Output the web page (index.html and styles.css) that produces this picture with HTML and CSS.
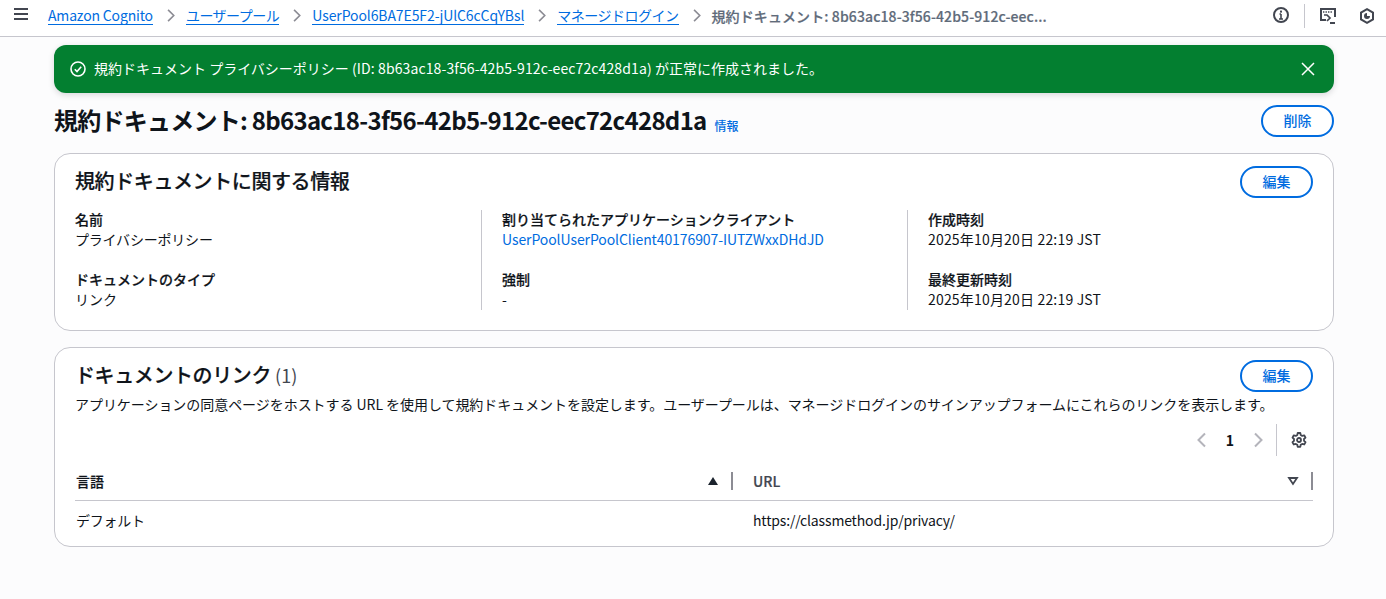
FILE: index.html
```html
<!DOCTYPE html>
<html lang="ja">
<head>
<meta charset="utf-8">
<title>規約ドキュメント</title>
<link rel="stylesheet" href="styles.css">
</head>
<body>
<header class="topbar">
  <button class="menu" aria-label="menu"><svg width="16" height="16" viewBox="0 0 16 16"><path d="M1 3h14M1 8h14M1 13h14" stroke="#424650" stroke-width="2" fill="none"/></svg></button>
  <nav class="crumbs">
    <a class="root" href="#">Amazon Cognito</a>
    <svg class="sep" width="16" height="16" viewBox="0 0 16 16"><path d="M5 1l7 7-7 7" stroke="#8c8c94" stroke-width="2" fill="none"/></svg>
    <a class="kana" href="#">ユーザープール</a>
    <svg class="sep" width="16" height="16" viewBox="0 0 16 16"><path d="M5 1l7 7-7 7" stroke="#8c8c94" stroke-width="2" fill="none"/></svg>
    <a href="#">UserPool6BA7E5F2-jUlC6cCqYBsl</a>
    <svg class="sep" width="16" height="16" viewBox="0 0 16 16"><path d="M5 1l7 7-7 7" stroke="#8c8c94" stroke-width="2" fill="none"/></svg>
    <a class="kana" href="#">マネージドログイン</a>
    <svg class="sep" width="16" height="16" viewBox="0 0 16 16"><path d="M5 1l7 7-7 7" stroke="#8c8c94" stroke-width="2" fill="none"/></svg>
    <span class="current">規約ドキュメント: 8b63ac18-3f56-42b5-912c-eec...</span>
  </nav>
  <div class="tools">
    <svg class="t-info" width="16" height="16" viewBox="0 0 16 16" fill="none"><circle cx="8" cy="8" r="7" stroke="#424650" stroke-width="2"/><path d="M8 7v5M6 12h4M6.5 7H8" stroke="#424650" stroke-width="1.6"/><rect x="7" y="3.6" width="2" height="2" fill="#424650"/></svg>
    <span class="tool-div"></span>
    <svg class="t-cloud" width="18" height="18" viewBox="0 0 18 18" fill="none"><path d="M7 13H2V2h14v8" stroke="#424650" stroke-width="2"/><path d="M4 5h1.4M6.5 5h1.4M9 5h1.4M11.5 5h1.4" stroke="#424650" stroke-width="1.6"/><path d="M5 8h3l3 3-3 3" stroke="#424650" stroke-width="1.7"/><path d="M11 16h5" stroke="#424650" stroke-width="2"/></svg>
    <svg class="t-hex" width="16" height="16" viewBox="0 0 16 16" fill="none"><path d="M8 1.2l6 3.4v6.8l-6 3.4-6-3.4V4.6z" stroke="#424650" stroke-width="2"/><path d="M8 5a3 3 0 1 0 3 3H8z" fill="#424650"/></svg>
  </div>
</header>

<main class="page">
  <div class="flash">
    <svg class="flash-icon" width="16" height="16" viewBox="0 0 16 16" fill="none"><circle cx="8" cy="8" r="7" stroke="#fff" stroke-width="1.6"/><path d="M4.8 8.2l2.2 2.3 4.2-4.8" stroke="#fff" stroke-width="1.6"/></svg>
    <span class="flash-text">規約ドキュメント プライバシーポリシー <span class="flash-id">(ID: 8b63ac18-3f56-42b5-912c-eec72c428d1a)</span> が正常に作成されました。</span>
    <svg class="flash-close" width="14" height="14" viewBox="0 0 14 14" fill="none"><path d="M1 1l12 12M13 1L1 13" stroke="#fff" stroke-width="1.5"/></svg>
  </div>

  <div class="page-head">
    <h1>規約ドキュメント: <span class="h1-id">8b63ac18-3f56-42b5-912c-eec72c428d1a</span></h1>
    <a class="info" href="#">情報</a>
    <button class="btn">削除</button>
  </div>

  <section class="card card-info">
    <div class="card-head">
      <h2>規約ドキュメントに関する情報</h2>
      <button class="btn">編集</button>
    </div>
    <div class="cols">
      <div class="col">
        <div class="kv"><div class="k">名前</div><div class="v kana-v">プライバシーポリシー</div></div>
        <div class="kv"><div class="k">ドキュメントのタイプ</div><div class="v">リンク</div></div>
      </div>
      <div class="col">
        <div class="kv"><div class="k">割り当てられたアプリケーションクライアント</div><div class="v"><a class="client" href="#">UserPoolUserPoolClient40176907-IUTZWxxDHdJD</a></div></div>
        <div class="kv"><div class="k">強制</div><div class="v">-</div></div>
      </div>
      <div class="col">
        <div class="kv"><div class="k">作成時刻</div><div class="v date">2025年10月20日 22:19 JST</div></div>
        <div class="kv"><div class="k">最終更新時刻</div><div class="v date">2025年10月20日 22:19 JST</div></div>
      </div>
    </div>
  </section>

  <section class="card card-links">
    <div class="card-head">
      <h2>ドキュメントのリンク <span class="count">(1)</span></h2>
      <button class="btn">編集</button>
    </div>
    <p class="desc">アプリケーションの同意ページをホストする URL を使用して規約ドキュメントを設定します。ユーザープールは、マネージドログインのサインアップフォームにこれらのリンクを表示します。</p>
    <div class="pager">
      <svg width="12" height="16" viewBox="0 0 12 16" fill="none"><path d="M9 1.500L2.500 8 9 14.500" stroke="#b4b4bb" stroke-width="2"/></svg>
      <span class="page-num">1</span>
      <svg width="12" height="16" viewBox="0 0 12 16" fill="none"><path d="M3 1.500L9.500 8 3 14.500" stroke="#b4b4bb" stroke-width="2"/></svg>
      <span class="pager-div"></span>
      <svg class="gear" width="16" height="16" viewBox="0 0 16 16" fill="none"><path d="M6.700 1h2.600l.4 2 1.500.9 2-.6 1.300 2.300-1.500 1.400v1.800l1.500 1.400-1.300 2.300-2-.6-1.500.9-.4 2H6.700l-.4-2-1.500-.9-2 .6L1.500 10.200 3 8.800V7L1.500 5.600 2.800 3.300l2 .6 1.500-.9z" stroke="#424650" stroke-width="1.800" stroke-linejoin="round"/><circle cx="8" cy="8" r="2" stroke="#424650" stroke-width="1.800"/></svg>
    </div>
    <div class="table">
      <div class="th th-lang"><span>言語</span><svg width="12" height="10" viewBox="0 0 12 10"><path d="M1 9L6 1l5 8z" fill="#1b232d"/></svg><i class="th-sep"></i></div>
      <div class="th th-url"><span>URL</span><svg width="12" height="10" viewBox="0 0 12 10" fill="none"><path d="M2 2h8L6 8z" stroke="#424650" stroke-width="1.800"/></svg><i class="th-sep"></i></div>
      <div class="td td-lang">デフォルト</div>
      <div class="td td-url">https://classmethod.jp/privacy/</div>
    </div>
  </section>
</main>
</body>
</html>
```

FILE: styles.css
```css
* { box-sizing: border-box; }
html, body { margin: 0; padding: 0; }
body {
  width: 1386px;
  height: 599px;
  overflow: hidden;
  background: #fcfcfd;
  color: #0f141a;
  font-family: "Noto Sans CJK JP", "Noto Sans", sans-serif;
  font-size: 14px;
  line-height: 20px;
}
a { color: #006ce0; text-decoration: none; }
h1, h2, p { margin: 0; }

.topbar {
  height: 37px;
  background: #fff;
  border-bottom: 1px solid #c6c6cd;
  display: flex;
  align-items: center;
  padding: 0 11px 5px 13px;
}
.menu { border: 0; background: none; padding: 0; width: 16px; height: 16px; margin: -3px 19px 0 0; display: flex; }
.crumbs { display: flex; align-items: center; flex: 1; white-space: nowrap; }
.crumbs a { border-bottom: 1px solid #006ce0; line-height: 18px; letter-spacing: -.1px; }
.crumbs a.root { letter-spacing: -.17px; }
.crumbs a.kana { letter-spacing: -.5px; }
.crumbs .sep { margin: 0 9px 0 11px; width: 13px; height: 13px; }
.current { color: #5f6b7a; font-weight: 500; letter-spacing: .1px; -webkit-text-stroke: .2px #5f6b7a; }
.tools { display: flex; align-items: center; }
.t-info { margin-top: -2px; }
.tool-div { width: 1px; height: 24px; background: #c6c6cd; margin: 0 14px 0 15px; }
.t-hex { margin-left: 22px; }

.page { padding: 8px 52px 0 54px; }

.flash {
  height: 48px;
  background: #037f30;
  border-radius: 12px;
  box-shadow: 0 2px 6px rgba(0, 7, 22, .15);
  color: #fff;
  display: flex;
  align-items: center;
  padding: 0 19px 0 16px;
}
.flash-text { flex: 1; margin: -2px 0 0 8px; }
.flash-id { letter-spacing: .11px; }

.page-head {
  display: flex;
  align-items: center;
  margin-top: 12px;
  height: 32px;
}
h1 { font-size: 24px; line-height: 32px; font-weight: 700; white-space: nowrap; letter-spacing: -.75px; margin-top: -2px; }
.h1-id { letter-spacing: -.7px; }
.info { font-size: 12px; font-weight: 500; margin: 9px auto 0 8px; }

.btn {
  height: 32px;
  width: 73px;
  border: 2px solid #006ce0;
  border-radius: 20px;
  background: #fff;
  color: #006ce0;
  font: 500 14px/20px "Noto Sans CJK JP", "Noto Sans", sans-serif;
  padding: 0 0 2px;
}

.card {
  background: #fff;
  border: 1px solid #c6c6cd;
  border-radius: 16px;
  padding: 12px 20px 0;
}
.card-info { height: 178px; margin-top: 16px; }
.card-links { height: 200px; margin-top: 16px; }
.card-head { display: flex; justify-content: space-between; align-items: flex-start; height: 32px; }
h2 { font-size: 20px; line-height: 30px; font-weight: 500; letter-spacing: -.4px; -webkit-text-stroke: .2px #0f141a; }
.count { font-weight: 400; color: #424650; font-size: 18px; letter-spacing: 0; -webkit-text-stroke: 0; }

.cols { display: grid; grid-template-columns: 406px 426px 386px; margin-top: 12px; }
.col { height: 100px; }
.col + .col { border-left: 1px solid #c6c6cd; padding-left: 20px; }
.kv { height: 60px; }
.kv:first-child { margin-top: -1px; }
.kv:last-child { height: 40px; }
.k { font-weight: 500; -webkit-text-stroke: .2px #0f141a; }
.kana-v { letter-spacing: -.2px; }
.client { letter-spacing: -.09px; }
.date { letter-spacing: .18px; }

.desc { white-space: nowrap; font-size: 14px; margin: 2px 0 0 0; letter-spacing: -.05px; }
.pager { display: flex; align-items: center; justify-content: flex-end; height: 32px; margin-top: 10px; }
.page-num { font-weight: 700; width: 44px; text-align: center; }
.pager-div { width: 1px; height: 32px; background: #c6c6cd; margin: 0 14px 0 12px; }
.gear { margin-right: 6px; }

.table {
  display: grid;
  grid-template-columns: 678px 560px;
  margin-top: 7px;
}
.th {
  height: 38px;
  border-bottom: 1px solid #c6c6cd;
  display: flex;
  align-items: center;
  font-weight: 500;
  color: #424650;
  padding: 0 0 2px 1px;
  -webkit-text-stroke: .2px;
}
.th-url { padding-left: 0; }
.th svg { margin-left: auto; margin-right: 12px; }
.th-sep { width: 2px; height: 18px; background: #8c8c94; }
.th-lang { color: #0f141a; }
.th-lang .th-sep { margin-right: 20px; }
.td { height: 42px; display: flex; align-items: center; padding: 0 0 4px 1px; }
.td-lang { letter-spacing: -.25px; }
.td-url { padding-left: 0; letter-spacing: -.16px; }
```
